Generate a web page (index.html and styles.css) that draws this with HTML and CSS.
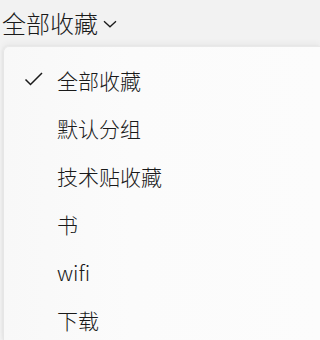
FILE: index.html
```html
<!DOCTYPE html>
<html lang="zh-CN">
<head>
<meta charset="utf-8">
<link rel="stylesheet" href="styles.css">
</head>
<body>
<div class="header">
  <span class="title">全部收藏</span>
  <svg class="chevron" width="14" height="8" viewBox="0 0 14 8"><path d="M1 1.2 L7 6.8 L13 1.2" fill="none" stroke="#1a1a1a" stroke-width="1.3"/></svg>
</div>
<div class="menu">
  <div class="item selected">
    <span class="check"><svg width="20" height="14" viewBox="0 0 20 14"><path d="M1.5 7.5 L6.5 12.5 L18 1" fill="none" stroke="#1a1a1a" stroke-width="1.5"/></svg></span>
    <span class="label">全部收藏</span>
  </div>
  <div class="item"><span class="check"></span><span class="label">默认分组</span></div>
  <div class="item"><span class="check"></span><span class="label">技术贴收藏</span></div>
  <div class="item"><span class="check"></span><span class="label">书</span></div>
  <div class="item"><span class="check"></span><span class="label">wifi</span></div>
  <div class="item"><span class="check"></span><span class="label">下载</span></div>
</div>
</body>
</html>
```
FILE: styles.css
```css
html, body {
  margin: 0;
  padding: 0;
  height: 100%;
  overflow: hidden;
}
body {
  background: #f2f2f2;
  font-family: "Noto Sans CJK SC", "Noto Sans", sans-serif;
  color: #1a1a1a;
  display: flex;
  flex-direction: column;
}
.header {
  height: 46px;
  flex: none;
  display: flex;
  align-items: center;
  padding-left: 2px;
  gap: 5px;
}
.title {
  font-size: 24px;
  line-height: 46px;
  font-weight: 300;
}
.chevron {
  display: block;
  margin-top: 1px;
}
.menu {
  flex: 1;
  min-height: 0;
  overflow: hidden;
  margin-left: 3px;
  background: linear-gradient(90deg, #f8f8f8 0%, #fbfbfb 40%, #fcfcfc 100%);
  border-left: 1px solid #e6e6e6;
  border-top: 1px solid #e9e9e9;
  border-top-left-radius: 6px;
  box-shadow: 0 -3px 6px rgba(0,0,0,0.04), -1px 0 3px rgba(0,0,0,0.05);
  padding-top: 9px;
}
.item {
  height: 48px;
  display: flex;
  align-items: center;
}
.check {
  width: 53px;
  display: flex;
  justify-content: flex-start;
  padding-left: 20px;
  box-sizing: border-box;
}
.check svg {
  display: block;
  margin-top: -2px;
}
.label {
  font-size: 21px;
  line-height: 48px;
  font-weight: 300;
}
```
